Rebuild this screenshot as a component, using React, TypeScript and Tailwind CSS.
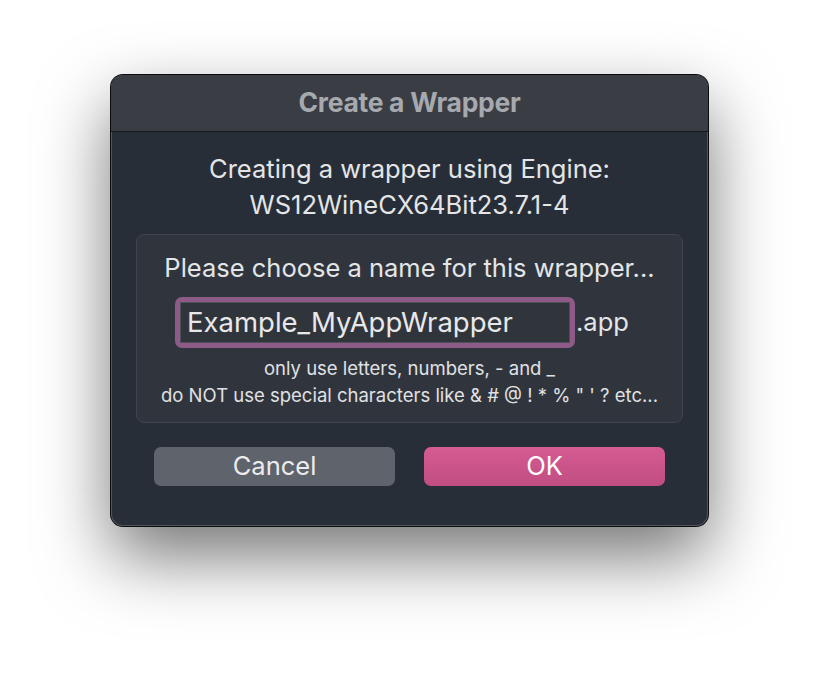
import React from "react";

export default function App() {
  const font = { fontFamily: "Inter, 'Noto Sans', sans-serif" };
  return (
    <div className="w-[820px] h-[674px] bg-white flex flex-col pt-[75px] pl-[111px]" style={font}>
      <div className="w-[597px] h-[451px] rounded-[12px] overflow-hidden flex flex-col bg-[#282e37] shadow-[0_0_0_1px_#0b0c0e,inset_0_0_0_1px_#51545a,0_30px_70px_rgba(0,0,0,0.55)]">
        <div className="h-[57px] shrink-0 flex items-center justify-center bg-[#3a3d44] border-b border-[#15181c]">
          <span className="text-[26.5px] font-bold text-[#a6a9ae] tracking-[-0.3px]">Create a Wrapper</span>
        </div>
        <div className="flex flex-col px-[25px] pt-[19px]">
          <div className="text-[25.5px] leading-[36px] text-[#e4e5e7] text-center">
            <div>Creating a wrapper using Engine:</div>
            <div>WS12WineCX64Bit23.7.1-4</div>
          </div>
          <div className="mt-[11px] h-[189px] rounded-[8px] bg-[#30353d] border border-[#40454d] flex flex-col pt-[18px]">
            <div className="text-[25.5px] leading-[30px] text-[#e4e5e7] text-center">
              Please choose a name for this wrapper...
            </div>
            <div className="mt-[14px] flex items-center pl-[38px]">
              <div className="w-[400px] h-[51px] rounded-[7px] border-[5px] border-[#8e5a87] bg-[#8e5a87]">
                <div className="w-full h-full bg-[#30353c] border border-[#4d5158] flex items-center pl-[6px] text-[27.5px] text-[#e8e8ea]">
                  Example_MyAppWrapper
                </div>
              </div>
              <span className="ml-[1px] text-[25.5px] text-[#e4e5e7]">.app</span>
            </div>
            <div className="mt-[7px] text-[18.5px] leading-[27px] text-[#e0e1e3] text-center">
              <div>only use letters, numbers, - and _</div>
              <div>do NOT use special characters like &amp; # @ ! * % " ' ? etc...</div>
            </div>
          </div>
          <div className="mt-[24px] flex justify-between px-[18px]">
            <div className="w-[241px] h-[39px] rounded-[7px] bg-[#5f636b] flex items-center justify-center text-[25.5px] text-[#ececee]">
              Cancel
            </div>
            <div className="w-[241px] h-[39px] rounded-[7px] bg-gradient-to-b from-[#d65b92] to-[#c04e83] flex items-center justify-center text-[25.5px] text-white">
              OK
            </div>
          </div>
        </div>
      </div>
    </div>
  );
}
